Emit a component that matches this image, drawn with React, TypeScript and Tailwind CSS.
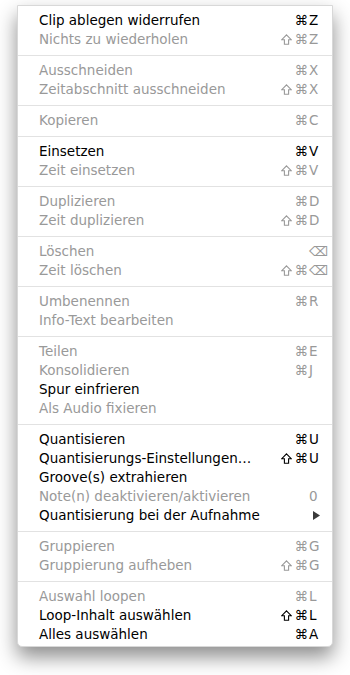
import React from "react";

type Item = { label: string; shift?: boolean; cmd?: boolean; key?: string; on?: boolean; arrow?: boolean };

const groups: Item[][] = [
  [
    { label: "Clip ablegen widerrufen", cmd: true, key: "Z", on: true },
    { label: "Nichts zu wiederholen", shift: true, cmd: true, key: "Z" },
  ],
  [
    { label: "Ausschneiden", cmd: true, key: "X" },
    { label: "Zeitabschnitt ausschneiden", shift: true, cmd: true, key: "X" },
  ],
  [{ label: "Kopieren", cmd: true, key: "C" }],
  [
    { label: "Einsetzen", cmd: true, key: "V", on: true },
    { label: "Zeit einsetzen", shift: true, cmd: true, key: "V" },
  ],
  [
    { label: "Duplizieren", cmd: true, key: "D" },
    { label: "Zeit duplizieren", shift: true, cmd: true, key: "D" },
  ],
  [
    { label: "Löschen", key: "⌫" },
    { label: "Zeit löschen", shift: true, cmd: true, key: "⌫" },
  ],
  [
    { label: "Umbenennen", cmd: true, key: "R" },
    { label: "Info-Text bearbeiten" },
  ],
  [
    { label: "Teilen", cmd: true, key: "E" },
    { label: "Konsolidieren", cmd: true, key: "J" },
    { label: "Spur einfrieren", on: true },
    { label: "Als Audio fixieren" },
  ],
  [
    { label: "Quantisieren", cmd: true, key: "U", on: true },
    { label: "Quantisierungs-Einstellungen…", shift: true, cmd: true, key: "U", on: true },
    { label: "Groove(s) extrahieren", on: true },
    { label: "Note(n) deaktivieren/aktivieren", key: "0" },
    { label: "Quantisierung bei der Aufnahme", arrow: true, on: true },
  ],
  [
    { label: "Gruppieren", cmd: true, key: "G" },
    { label: "Gruppierung aufheben", shift: true, cmd: true, key: "G" },
  ],
  [
    { label: "Auswahl loopen", cmd: true, key: "L" },
    { label: "Loop-Inhalt auswählen", shift: true, cmd: true, key: "L", on: true },
    { label: "Alles auswählen", cmd: true, key: "A", on: true },
  ],
];

function Shift() {
  return (
    <svg width="11" height="11" viewBox="0 0 11 11" className="mr-[3px] inline-block">
      <path
        d="M5.5 0.9 L10.2 5.7 L7.6 5.7 L7.6 10.2 L3.4 10.2 L3.4 5.7 L0.8 5.7 Z"
        fill="none"
        stroke="currentColor"
        strokeWidth="1.1"
        strokeLinejoin="miter"
      />
    </svg>
  );
}

function Row({ it }: { it: Item }) {
  const color = it.on ? "text-black" : "text-[#999999]";
  return (
    <div className={`flex h-[19px] items-center pl-[21px] pr-[7px] ${color}`}>
      <span className="flex-1 whitespace-nowrap">{it.label}</span>
      <span className="flex w-[40px] items-center justify-end whitespace-nowrap">
        {it.shift && <Shift />}
        {it.cmd && <span>⌘</span>}
      </span>
      <span className="flex w-[17px] items-center pl-[1px] whitespace-nowrap">
        {it.arrow ? (
          <svg width="7" height="9" viewBox="0 0 7 9" className="ml-[4px]">
            <path d="M0 0 L7 4.5 L0 9 Z" fill="#3a3a3a" />
          </svg>
        ) : (
          it.key ?? ""
        )}
      </span>
    </div>
  );
}

export default function App() {
  return (
    <div className="h-[675px] w-[350px] bg-white pt-[5px] pl-[17px]" style={{ fontFamily: '"DejaVu Sans", sans-serif' }}>
      <div className="w-[316px] rounded-b-[5px] border border-[#d8d8d8] bg-white pt-[5px] pb-[2px] text-[13.5px] shadow-[0_10px_20px_rgba(0,0,0,0.45)]">
        {groups.map((g, gi) => (
          <div key={gi}>
            {gi > 0 && (
              <div className="flex h-[12px] items-center">
                <div className="h-[1px] w-full bg-[#e2e2e2]" />
              </div>
            )}
            {g.map((it, i) => (
              <Row key={i} it={it} />
            ))}
          </div>
        ))}
      </div>
    </div>
  );
}
